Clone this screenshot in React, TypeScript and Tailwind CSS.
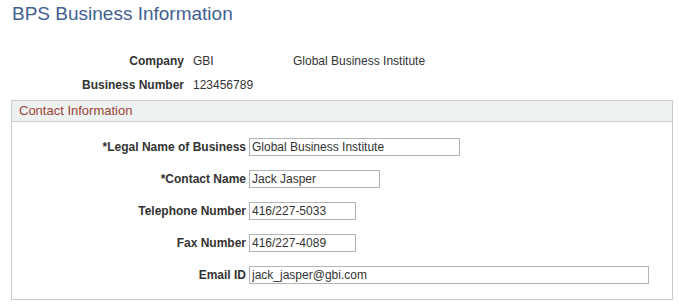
import React from "react";

type FieldProps = {
  label: string;
  value: string;
  width: string;
};

function Field(props: FieldProps) {
  return (
    <div className="flex items-center h-[18px]">
      <label className="w-[237px] pr-[3px] text-right font-bold text-[12px] text-[#333333] whitespace-nowrap">
        {props.label}
      </label>
      <input
        type="text"
        defaultValue={props.value}
        className={
          props.width +
          " h-[18px] border border-[#b4b4b4] bg-white px-[2px] text-[12px] text-[#333333] outline-none"
        }
      />
    </div>
  );
}

export default function App() {
  return (
    <div
      className="w-[679px] h-[308px] bg-white overflow-hidden"
      style={{ fontFamily: '"Liberation Sans", Arial, sans-serif' }}
    >
      <h1 className="pl-[12px] pt-[3px] h-[22px] leading-[22px] text-[19px] text-[#42608f] font-normal">
        BPS Business Information
      </h1>

      <div className="mt-[31px] flex flex-col gap-[8px] text-[12px] text-[#333333]">
        <div className="flex h-[16px] leading-[16px]">
          <span className="w-[184px] text-right font-bold">Company</span>
          <span className="w-[109px] pl-[9px]">GBI</span>
          <span>Global Business Institute</span>
        </div>
        <div className="flex h-[16px] leading-[16px]">
          <span className="w-[184px] text-right font-bold">Business Number</span>
          <span className="pl-[9px]">123456789</span>
        </div>
      </div>

      <div className="ml-[11px] mt-[7px] w-[662px] border border-[#c8ccd0]">
        <div className="h-[21px] bg-[#eef1f2] border-b border-[#c8ccd0] pl-[7px] text-[13px] leading-[20px] text-[#9a4431]">
          Contact Information
        </div>
        <div className="flex flex-col gap-[14px] pt-[16px] pb-[15px]">
          <Field label="*Legal Name of Business" value="Global Business Institute" width="w-[211px]" />
          <Field label="*Contact Name" value="Jack Jasper" width="w-[131px]" />
          <Field label="Telephone Number" value="416/227-5033" width="w-[107px]" />
          <Field label="Fax Number" value="416/227-4089" width="w-[107px]" />
          <Field label="Email ID" value="jack_jasper@gbi.com" width="w-[400px]" />
        </div>
      </div>
    </div>
  );
}
